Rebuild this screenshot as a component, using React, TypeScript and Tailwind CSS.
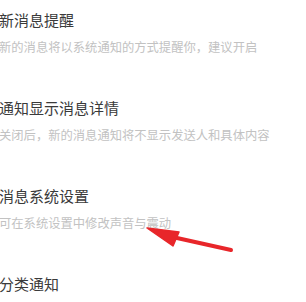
import React from "react";

const items = [
  { t: "新消息提醒", s: "新的消息将以系统通知的方式提醒你，建议开启" },
  { t: "通知显示消息详情", s: "关闭后，新的消息通知将不显示发送人和具体内容" },
  { t: "消息系统设置", s: "可在系统设置中修改声音与震动" },
  { t: "分类通知", s: "" },
];

export default function App() {
  return (
    <div
      className="relative w-[306px] h-[302px] overflow-hidden bg-white"
      style={{ fontFamily: '"Noto Sans CJK SC", "Noto Sans", sans-serif' }}
    >
      <div className="flex flex-col gap-[43px] pt-[10px] pl-0 -ml-[1px]">
        {items.map((it) => (
          <div key={it.t} className="flex flex-col gap-[9px]">
            <div className="h-[20px] leading-[20px] text-[15px] text-[#3a3a3a] whitespace-nowrap">
              {it.t}
            </div>
            {it.s && (
              <div className="h-[16px] leading-[16px] text-[12.3px] text-[#c2c2c2] whitespace-nowrap">
                {it.s}
              </div>
            )}
          </div>
        ))}
      </div>
      <svg
        className="absolute left-0 top-0"
        width="306"
        height="302"
        viewBox="0 0 306 302"
      >
        <line x1="168" y1="236" x2="231" y2="250" stroke="#e8262a" strokeWidth="4" strokeLinecap="round" />
        <polygon points="147,228 179,232 173,246" fill="#e8262a" stroke="#e8262a" strokeWidth="1.5" strokeLinejoin="round" />
      </svg>
    </div>
  );
}
